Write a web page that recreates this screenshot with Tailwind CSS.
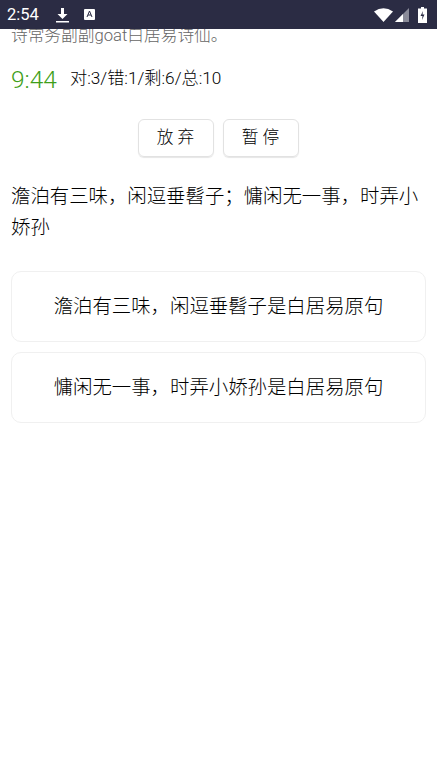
<!DOCTYPE html>
<html lang="zh">
<head>
    <meta charset="UTF-8">
    <meta name="viewport" content="width=device-width, initial-scale=1.0">
    <title>诗词答题</title>
    <script src="https://cdn.jsdelivr.net/npm/@tailwindcss/browser@4"></script>
</head>
<body class="bg-white w-[437px] h-[776px] overflow-hidden font-['Roboto','Noto_Sans_CJK_SC',sans-serif]">
    <!-- Status bar -->
    <div class="relative z-10 h-[29px] bg-[#2b2c44] flex items-center pl-[7px] pr-[10px] text-white">
        <span class="text-[16.5px] w-[34px] mt-[1px]">2:54</span>
        <svg class="ml-[15px]" width="14" height="16" viewBox="0 0 14 16"><path d="M5 1h3v6h3.500L6.500 12 1.500 7H5z" fill="#fff"/><rect x="0" y="14" width="13" height="1.500" fill="#fff"/></svg>
        <svg class="ml-[14px]" width="11" height="11" viewBox="0 0 11 11"><rect width="11" height="11" rx="1" fill="#fff"/><path d="M3 8 5.500 2 8 8M4 6h3" stroke="#2b2c44" stroke-width="1" fill="none"/></svg>
        <div class="ml-auto flex items-center">
            <svg width="19" height="14" viewBox="0 0 19 14"><path d="M0 3.500Q9.500-3 19 3.500L9.500 14z" fill="#fff"/></svg>
            <svg class="ml-[2px]" width="14" height="14" viewBox="0 0 14 14"><path d="M14 0V14H0z" fill="#8a8b99"/><path d="M8 6V14H0z" fill="#fff"/></svg>
            <svg class="ml-[9px]" width="9" height="16" viewBox="0 0 9 16"><path d="M3 0h3v1.500h3V16H0V1.500h3z" fill="#fff"/><path d="M5 4 2.500 9h2L4 13 6.500 7.500h-2z" fill="#2b2c44"/></svg>
        </div>
    </div>

    <!-- Content -->
    <div class="px-[11px]">
        <p class="text-[16.7px] leading-[20px] font-light text-[#666] -mt-[3px]">诗常务副副goat白居易诗仙。</p>

        <div class="flex items-center mt-[20px] h-[26px]">
            <span class="text-[24.500px] font-light text-[#3f9f1a] w-[59px] mt-[2px]">9:44</span>
            <span class="text-[17.200px] font-light text-black -mt-[1px]">对:3/错:1/剩:6/总:10</span>
        </div>

        <div class="flex justify-center gap-[9px] mt-[27px] ml-[-1px]">
            <button class="w-[76px] h-[38px] border border-[#e2e2e2] shadow-[0_1px_1px_#e6e6e6] rounded-[6px] text-[16.700px] font-light text-black">放 弃</button>
            <button class="w-[76px] h-[38px] border border-[#e2e2e2] shadow-[0_1px_1px_#e6e6e6] rounded-[6px] text-[16.700px] font-light text-black">暂 停</button>
        </div>

        <p class="text-[19.400px] leading-[31px] font-light text-black mt-[24px]">澹泊有三味，闲逗垂髫子；慵闲无一事，时弄小娇孙</p>

        <div class="mt-[28px] flex flex-col gap-[10px] w-[415px]">
            <div class="h-[71px] border border-[#f0f0f0] rounded-[10px] flex items-center justify-center text-[19.400px] font-light text-black">澹泊有三味，闲逗垂髫子是白居易原句</div>
            <div class="h-[71px] border border-[#f0f0f0] rounded-[10px] flex items-center justify-center text-[19.400px] font-light text-black">慵闲无一事，时弄小娇孙是白居易原句</div>
        </div>
    </div>
</body>
</html>
